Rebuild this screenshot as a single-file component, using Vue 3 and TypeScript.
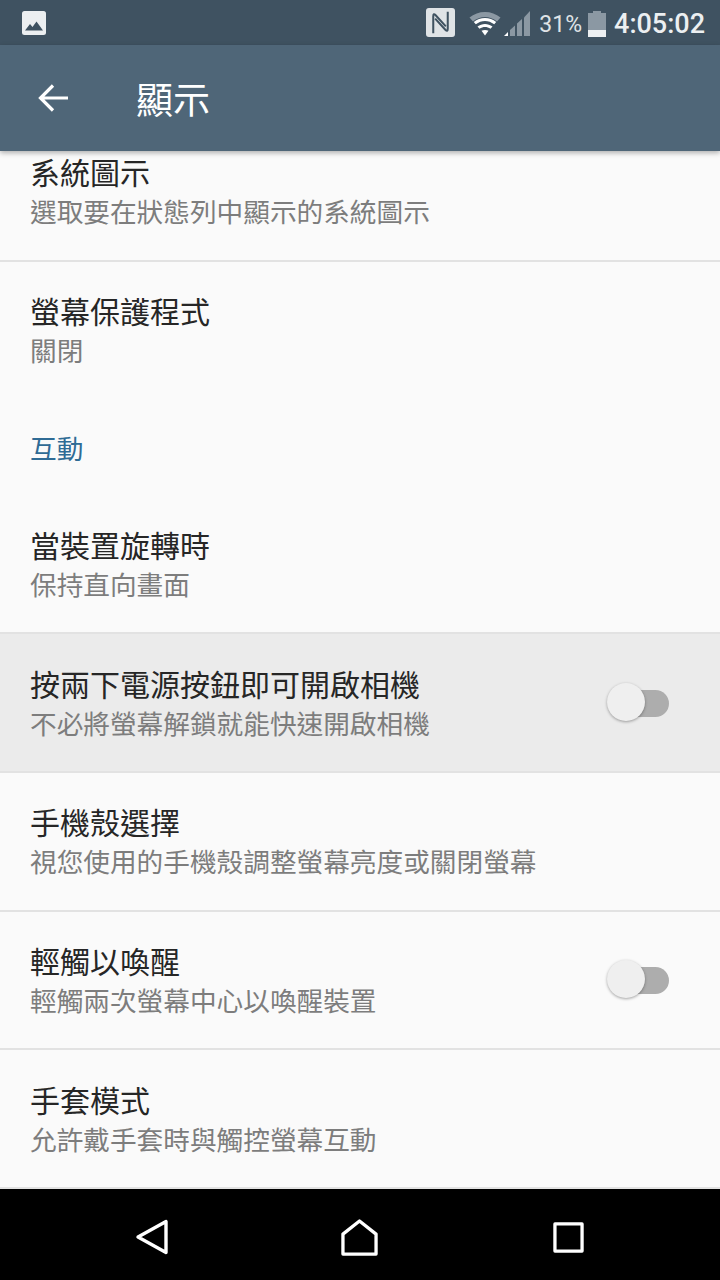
<template>
  <div class="phone">
    <div class="status-bar">
      <svg class="pic-icon" viewBox="0 0 24 24" width="24" height="24">
        <rect x="0" y="0" width="24" height="24" rx="2.5" fill="#eceff1" />
        <path d="M3 19.5 L8 13 L10.5 16 L14.5 10.5 L21 19.5 Z" fill="#3f5261" />
      </svg>
      <div class="status-right">
        <svg class="nfc" viewBox="0 0 30 30" width="29" height="29">
          <rect width="30" height="30" rx="3" fill="#dfe3e6" />
          <path d="M7.500 26V8.500Q7.500 5 10 7.500L20.500 19" fill="none" stroke="#3f5261" stroke-width="2.100" />
          <path d="M22.500 4V21.500Q22.500 25 20 22.500L9.500 11" fill="none" stroke="#3f5261" stroke-width="2.100" />
        </svg>
        <svg class="wifi" viewBox="0 0 32 26" width="32" height="26">
          <path d="M0.500 7.500C9 0 23 0 31.500 7.500L28 11.500C21 5.500 11 5.500 4 11.500Z" fill="#8b98a3" />
          <path d="M4.800 12C11 6.500 21 6.500 27.200 12L25.200 14.300C19.500 9.800 12.500 9.800 6.800 14.300Z" fill="#fff" />
          <path d="M8.500 16.500C13 13 19 13 23.500 16.500L21.500 18.800C18 16.400 14 16.400 10.500 18.800Z" fill="#fff" />
          <path d="M12.500 20.800C14.500 19.600 17.500 19.600 19.500 20.800L16 25.500Z" fill="#fff" />
        </svg>
        <svg class="signal" viewBox="0 0 26 26" width="26" height="26">
          <path d="M0 26L4 22V26Z" fill="#fff" />
          <path d="M6 26V20L11 15.500V26Z" fill="#8b98a3" />
          <path d="M13 26V13.500L18 9V26Z" fill="#8b98a3" />
          <path d="M20 26V7.500L26 1V26Z" fill="#8b98a3" />
        </svg>
        <span class="battery-pct">31%</span>
        <svg class="battery" viewBox="0 0 18 26" width="18" height="26">
          <path d="M5 0H13V2H18V26H0V2H5Z" fill="#8b98a3" />
          <path d="M0 19H18V26H0Z" fill="#eceff1" />
        </svg>
        <span class="clock">4:05:02</span>
      </div>
    </div>

    <div class="app-bar">
      <svg class="back" viewBox="0 0 32 30" width="32" height="30">
        <path d="M30 15H3M15 2.500L2.500 15L15 27.500" fill="none" stroke="#fff" stroke-width="3.200" />
      </svg>
      <h1 class="title">顯示</h1>
    </div>

    <div class="scroller">
      <div class="list">
        <template v-for="item in items" :key="item.title">
          <div v-if="item.category" class="category">{{ item.title }}</div>
          <div v-else class="row" :class="{ active: item.active, plain: item.plain }">
            <div class="row-text">
              <div class="row-title">{{ item.title }}</div>
              <div class="row-sub">{{ item.sub }}</div>
            </div>
            <div v-if="item.toggle" class="switch">
              <span class="track"></span>
              <span class="thumb"></span>
            </div>
          </div>
        </template>
      </div>
    </div>

    <div class="nav-bar">
      <svg viewBox="0 0 34 36" width="34" height="36">
        <path d="M3 18L31 2.500V33.500Z" fill="none" stroke="#fff" stroke-width="3.400" stroke-linejoin="round" />
      </svg>
      <svg class="home" viewBox="0 0 38 38" width="37" height="37">
        <path d="M2 36V15.500L19 2L36 15.500V36Z" fill="none" stroke="#fff" stroke-width="3.400" stroke-linejoin="round" />
      </svg>
      <svg viewBox="0 0 32 32" width="31" height="31">
        <rect x="2" y="2" width="28" height="28" fill="none" stroke="#fff" stroke-width="3.400" stroke-linejoin="round" />
      </svg>
    </div>
  </div>
</template>

<script setup lang="ts">
interface Item {
  title: string
  sub?: string
  category?: boolean
  toggle?: boolean
  active?: boolean
  plain?: boolean
}

const items: Item[] = [
  { title: '系統圖示', sub: '選取要在狀態列中顯示的系統圖示' },
  { title: '螢幕保護程式', sub: '關閉', plain: true },
  { title: '互動', category: true },
  { title: '當裝置旋轉時', sub: '保持直向畫面' },
  { title: '按兩下電源按鈕即可開啟相機', sub: '不必將螢幕解鎖就能快速開啟相機', toggle: true, active: true },
  { title: '手機殼選擇', sub: '視您使用的手機殼調整螢幕亮度或關閉螢幕' },
  { title: '輕觸以喚醒', sub: '輕觸兩次螢幕中心以喚醒裝置', toggle: true },
  { title: '手套模式', sub: '允許戴手套時與觸控螢幕互動' }
]
</script>

<style>
html,
body {
  margin: 0;
  background: #000;
}
</style>

<style scoped>
.phone {
  width: 720px;
  height: 1280px;
  display: flex;
  flex-direction: column;
  overflow: hidden;
  background: #fafafa;
  font-family: "Noto Sans CJK TC", "Noto Sans", sans-serif;
}

.status-bar {
  height: 45px;
  flex: none;
  display: flex;
  align-items: center;
  justify-content: space-between;
  padding: 0 15px 0 22px;
  background: #3f5261;
  font-family: Roboto, sans-serif;
}

.status-right {
  display: flex;
  align-items: center;
}

.nfc {
  margin-right: 14px;
}

.wifi {
  margin-right: 3px;
}

.signal {
  margin-right: 9px;
}

.battery-pct {
  font-size: 23px;
  color: #dfe3e6;
  margin: 3px 6px 0 0;
}

.battery {
  margin: 2px 8px 0 0;
}

.clock {
  font-size: 27px;
  font-weight: 500;
  color: #eceff1;
  margin-top: 2px;
}

.app-bar {
  position: relative;
  z-index: 1;
  height: 106px;
  flex: none;
  display: flex;
  align-items: center;
  background: #4f6678;
  box-shadow: 0 2px 5px rgba(0, 0, 0, 0.3);
}

.back {
  margin-left: 38px;
}

.title {
  margin: 0 0 0 66px;
  font-size: 37px;
  font-weight: 400;
  color: #fff;
}

.scroller {
  flex: 1;
  overflow: hidden;
}

.list {
  margin-top: -28.170px;
}

.row {
  height: 138.670px;
  box-sizing: border-box;
  display: flex;
  align-items: center;
  padding: 0 51px 1px 30px;
  border-bottom: 2px solid #e2e2e2;
  background: #fafafa;
}

.row.plain {
  border-bottom-color: transparent;
}

.row.active {
  background: #ebebeb;
}

.row-text {
  flex: 1;
}

.row-title {
  font-size: 30px;
  line-height: 40px;
  color: #262626;
}

.row-sub {
  margin-top: 1px;
  font-size: 26.670px;
  line-height: 38px;
  color: #7d7d7d;
}

.category {
  height: 95.500px;
  padding: 28px 30px 0;
  box-sizing: border-box;
  font-size: 26.670px;
  line-height: 40px;
  color: #2f6b95;
}

.switch {
  position: relative;
  width: 62px;
  height: 40px;
  margin-top: 1px;
}

.track {
  position: absolute;
  right: 0;
  top: 7px;
  width: 50px;
  height: 27px;
  border-radius: 14px;
  background: #adadad;
}

.thumb {
  position: absolute;
  left: 0;
  top: 0;
  width: 38px;
  height: 38px;
  border-radius: 50%;
  background: #efefef;
  box-shadow: 0 1px 3px rgba(0, 0, 0, 0.35);
}

.nav-bar {
  height: 91px;
  flex: none;
  box-sizing: border-box;
  display: flex;
  align-items: center;
  justify-content: space-between;
  padding: 5px 136px 0 135px;
  background: #000;
}

.home {
  margin-right: 3px;
}
</style>
